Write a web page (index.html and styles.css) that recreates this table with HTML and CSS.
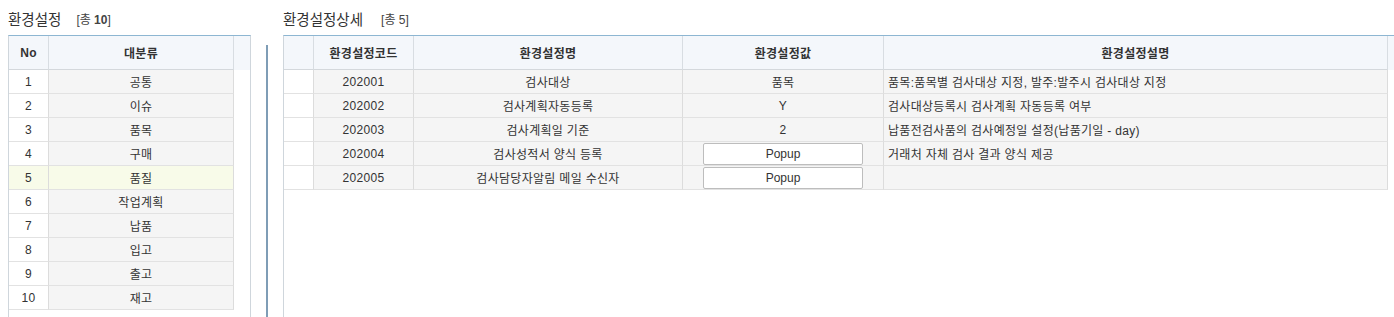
FILE: index.html
```html
<!DOCTYPE html>
<html lang="ko">
<head>
<meta charset="utf-8">
<title>환경설정</title>
<link rel="stylesheet" href="styles.css">
</head>
<body>
<div class="page">
  <section class="panel panel-left">
    <div class="title"><span class="title-text">환경설정</span><span class="count count-left">[총 <b>10</b>]</span></div>
    <div class="grid grid-left">
      <div class="row head">
        <div class="cell">No</div>
        <div class="cell">대분류</div>
        <div class="cell scroll"></div>
      </div>
      <div class="row"><div class="cell white">1</div><div class="cell">공통</div><div class="cell scroll"></div></div>
      <div class="row"><div class="cell white">2</div><div class="cell">이슈</div><div class="cell scroll"></div></div>
      <div class="row"><div class="cell white">3</div><div class="cell">품목</div><div class="cell scroll"></div></div>
      <div class="row"><div class="cell white">4</div><div class="cell">구매</div><div class="cell scroll"></div></div>
      <div class="row selected"><div class="cell white">5</div><div class="cell">품질</div><div class="cell scroll"></div></div>
      <div class="row"><div class="cell white">6</div><div class="cell">작업계획</div><div class="cell scroll"></div></div>
      <div class="row"><div class="cell white">7</div><div class="cell">납품</div><div class="cell scroll"></div></div>
      <div class="row"><div class="cell white">8</div><div class="cell">입고</div><div class="cell scroll"></div></div>
      <div class="row"><div class="cell white">9</div><div class="cell">출고</div><div class="cell scroll"></div></div>
      <div class="row"><div class="cell white">10</div><div class="cell">재고</div><div class="cell scroll"></div></div>
    </div>
  </section>
  <div class="splitter"></div>
  <section class="panel panel-right">
    <div class="title"><span class="title-text">환경설정상세</span><span class="count count-right">[총 5]</span></div>
    <div class="grid grid-right">
      <div class="row head">
        <div class="cell"></div>
        <div class="cell">환경설정코드</div>
        <div class="cell">환경설정명</div>
        <div class="cell">환경설정값</div>
        <div class="cell">환경설정설명</div>
        <div class="cell scroll"></div>
      </div>
      <div class="row">
        <div class="cell white"></div><div class="cell">202001</div><div class="cell">검사대상</div><div class="cell">품목</div>
        <div class="cell left">품목:품목별 검사대상 지정, 발주:발주시 검사대상 지정</div><div class="cell scroll"></div>
      </div>
      <div class="row">
        <div class="cell white"></div><div class="cell">202002</div><div class="cell">검사계획자동등록</div><div class="cell">Y</div>
        <div class="cell left">검사대상등록시 검사계획 자동등록 여부</div><div class="cell scroll"></div>
      </div>
      <div class="row">
        <div class="cell white"></div><div class="cell">202003</div><div class="cell">검사계획일 기준</div><div class="cell">2</div>
        <div class="cell left">납품전검사품의 검사예정일 설정(납품기일 - day)</div><div class="cell scroll"></div>
      </div>
      <div class="row">
        <div class="cell white"></div><div class="cell">202004</div><div class="cell">검사성적서 양식 등록</div>
        <div class="cell"><button class="popup" type="button">Popup</button></div>
        <div class="cell left">거래처 자체 검사 결과 양식 제공</div><div class="cell scroll"></div>
      </div>
      <div class="row">
        <div class="cell white"></div><div class="cell">202005</div><div class="cell">검사담당자알림 메일 수신자</div>
        <div class="cell"><button class="popup" type="button">Popup</button></div>
        <div class="cell left"></div><div class="cell scroll"></div>
      </div>
    </div>
  </section>
</div>
</body>
</html>
```
FILE: styles.css
```css
html, body {
  margin: 0;
  padding: 0;
  background: #ffffff;
}
body {
  width: 1394px;
  height: 317px;
  overflow: hidden;
  font-family: "Liberation Sans", "Noto Sans CJK KR", sans-serif;
  font-size: 12px;
  color: #333333;
}
.page {
  display: flex;
  height: 317px;
  padding-left: 8px;
}
.panel {
  display: flex;
  flex-direction: column;
  height: 317px;
}
.panel-left { width: 243px; }
.panel-right { width: 1111px; }
.splitter {
  width: 2px;
  margin: 45px 15px 0 15px;
  background: #7f9db6;
  align-self: stretch;
}
.title {
  height: 35px;
  display: flex;
  align-items: center;
  padding-top: 1px;
  box-sizing: border-box;
}
.title-text {
  font-family: "Noto Sans CJK KR", sans-serif;
  font-size: 14.5px;
  color: #333333;
}
.count {
  font-size: 12px;
  color: #444444;
  font-family: "Liberation Sans", "Noto Sans CJK KR", sans-serif;
}
.count b { font-weight: bold; }
.count-left { margin-left: 15px; }
.count-right { margin-left: 18px; }
.grid {
  flex: 1;
  border-top: 1px solid #8db6d2;
  border-left: 1px solid #cfd6dc;
  background: #ffffff;
}
.grid-left {
  border-right: 1px solid #cfd6dc;
}
.row {
  display: grid;
  height: 24px;
}
.grid-left .row { grid-template-columns: 40px 185px 16px; }
.grid-right .row { grid-template-columns: 30px 100px 269px 201px 504px 6px; }
.row .cell {
  box-sizing: border-box;
  border-right: 1px solid #dcdcdc;
  border-bottom: 1px solid #e2e2e2;
  background: #f5f5f5;
  display: flex;
  align-items: center;
  justify-content: center;
  white-space: nowrap;
  overflow: hidden;
  letter-spacing: 0.3px;
}
.row .cell.white { background: #ffffff; }
.row .cell.left { justify-content: flex-start; padding-left: 4px; }
.row .cell.scroll {
  border: none;
  background: #ffffff;
}
.row.head { height: 34px; }
.row.head .cell {
  background: #f4f7fb;
  font-weight: bold;
  color: #333333;
  border-bottom: 1px solid #d4d8dc;
  border-right: 1px solid #d8dde2;
}
.row.head .cell.scroll {
  border: none;
  background: #f4f7fb;
}
.row.selected .cell { background: #f8fbe9; }
.row.selected .cell.scroll { background: #ffffff; }
.popup {
  width: 160px;
  height: 22px;
  margin: 0;
  padding: 0;
  border: 1px solid #bdbdbd;
  border-radius: 2px;
  background: #ffffff;
  font-family: "Liberation Sans", sans-serif;
  font-size: 12px;
  color: #333333;
}
```
